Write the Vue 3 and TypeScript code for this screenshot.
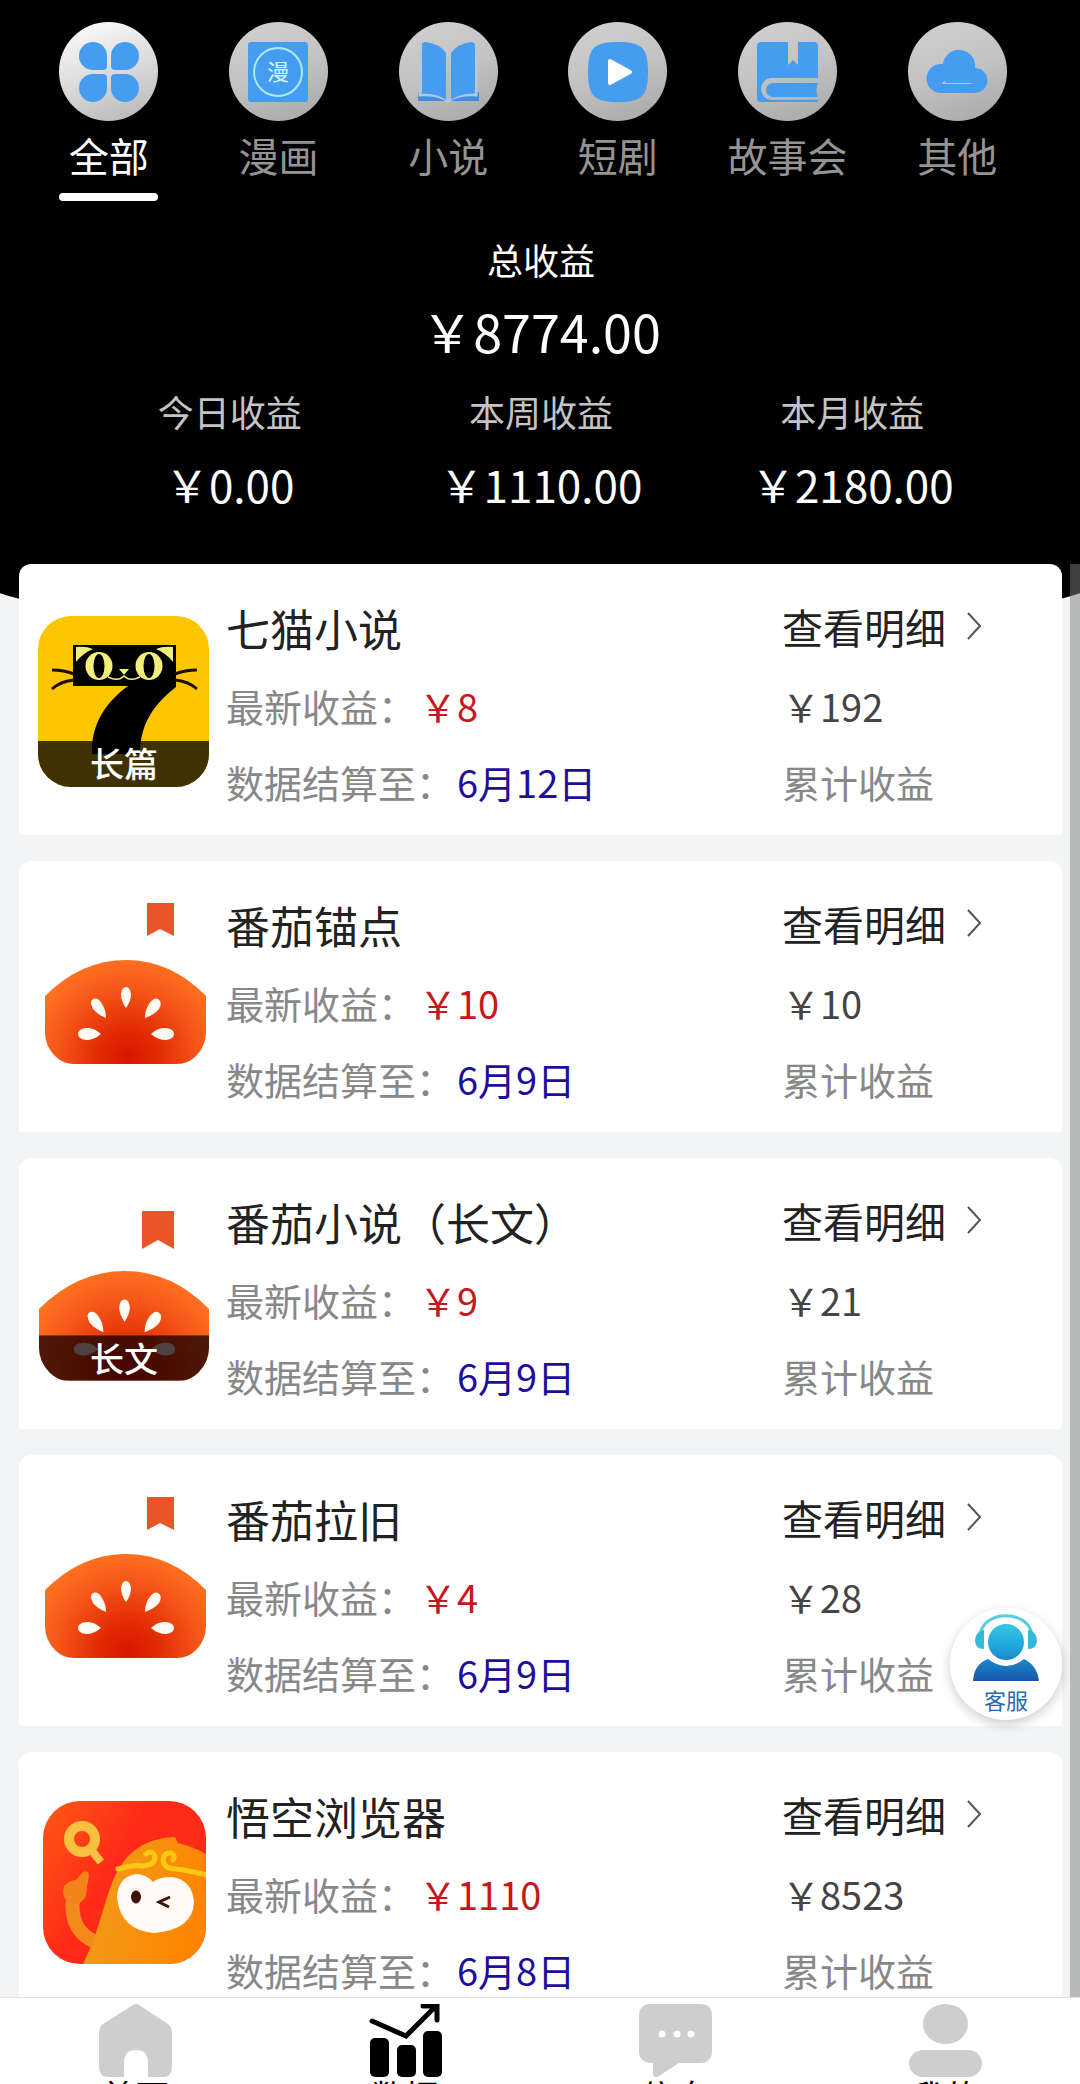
<script setup lang="ts">
import { ref } from 'vue'

type TabIcon = 'all' | 'comic' | 'novel' | 'drama' | 'story' | 'other'
type Logo = 'cat' | 'tomato' | 'tomatoLong' | 'monkey'
type NavIcon = 'home' | 'chart' | 'message' | 'user'

const tabs: { icon: TabIcon; label: string }[] = [
  { icon: 'all', label: '全部' },
  { icon: 'comic', label: '漫画' },
  { icon: 'novel', label: '小说' },
  { icon: 'drama', label: '短剧' },
  { icon: 'story', label: '故事会' },
  { icon: 'other', label: '其他' },
]
const activeTab = ref<TabIcon>('all')

const stats: { label: string; value: string }[] = [
  { label: '今日收益', value: '0.00' },
  { label: '本周收益', value: '1110.00' },
  { label: '本月收益', value: '2180.00' },
]

const cards: { logo: Logo; name: string; latest: number; date: string; total: number }[] = [
  { logo: 'cat', name: '七猫小说', latest: 8, date: '6月12日', total: 192 },
  { logo: 'tomato', name: '番茄锚点', latest: 10, date: '6月9日', total: 10 },
  { logo: 'tomatoLong', name: '番茄小说（长文）', latest: 9, date: '6月9日', total: 21 },
  { logo: 'tomato', name: '番茄拉旧', latest: 4, date: '6月9日', total: 28 },
  { logo: 'monkey', name: '悟空浏览器', latest: 1110, date: '6月8日', total: 8523 },
]

const navItems: { icon: NavIcon; label: string }[] = [
  { icon: 'home', label: '首页' },
  { icon: 'chart', label: '数据' },
  { icon: 'message', label: '信息' },
  { icon: 'user', label: '我的' },
]
const activeNav: NavIcon = 'chart'
</script>

<template>
  <div class="page">
    <header class="header">
      <div class="tabs" role="tablist">
        <button
          v-for="tab in tabs"
          :key="tab.icon"
          type="button"
          role="tab"
          class="tab"
          :class="{ active: tab.icon === activeTab }"
          :aria-selected="tab.icon === activeTab"
          @click="activeTab = tab.icon"
        >
          <span class="tab-icon">
            <svg viewBox="0 0 99 99" aria-hidden="true">
              <g v-if="tab.icon === 'all'" fill="#469df0">
                <path d="M34 20a14 14 0 0 0 0 28h10q4 0 4-4V34a14 14 0 0 0-14-14z" />
                <path d="M66 20a14 14 0 0 1 0 28H56q-4 0-4-4V34a14 14 0 0 1 14-14z" />
                <path d="M34 80a14 14 0 0 1 0-28h10q4 0 4 4v10a14 14 0 0 1-14 14z" />
                <path d="M66 80a14 14 0 0 0 0-28H56q-4 0-4 4v10a14 14 0 0 0 14 14z" />
              </g>
              <g v-else-if="tab.icon === 'comic'">
                <rect x="19" y="20" width="60" height="60" rx="3" fill="#469df0" />
                <circle cx="49" cy="50" r="24" fill="none" stroke="#a9ecff" stroke-width="2" />
                <text x="49" y="58" text-anchor="middle" font-size="22" fill="#d8f6ff">漫</text>
              </g>
              <g v-else-if="tab.icon === 'novel'">
                <path d="M19 70h7q14 2 21 9H19z" fill="#3d8ee0" />
                <path d="M80 70h-7q-14 2-21 9h28z" fill="#3d8ee0" />
                <path d="M21 28v45q18-1 28 6 10-7 28-6V28" fill="none" stroke="#b4c8dc" stroke-width="3" />
                <path d="M23 23q0-3 4-3 14 2 20 11v47q-10-7-24-7z" fill="#469df0" />
                <path d="M76 23q0-3-4-3-14 2-20 11v47q10-7 24-7z" fill="#469df0" />
              </g>
              <g v-else-if="tab.icon === 'drama'">
                <path d="M50 20c24 0 30 6 30 30s-6 30-30 30-30-6-30-30 6-30 30-30z" fill="#469df0" />
                <path d="M42 39l20 11-20 11z" fill="#fff" stroke="#fff" stroke-width="4" stroke-linejoin="round" />
              </g>
              <g v-else-if="tab.icon === 'story'">
                <path d="M23 20h27v23l5-5 5 5V20h16q4 0 4 4v32H34a11 11 0 0 0 0 22h46v2H23q-4 0-4-4V24q0-4 4-4z" fill="#469df0" />
                <path d="M80 61H35a7 7 0 0 0 0 14h45q-3-7 0-14z" fill="#469df0" />
              </g>
              <g v-else>
                <path d="M33 71a14 14 0 0 1 0-29h2a16 16 0 0 1 32 4a12.500 12.500 0 0 1 0 25z" fill="#469df0" />
                <path d="M34 62l2-3 2 2h24q2 0 2 1z" fill="#a9c9e8" />
              </g>
            </svg>
          </span>
          <span class="tab-label">{{ tab.label }}</span>
        </button>
      </div>

      <section class="summary">
        <p class="total-label">总收益</p>
        <p class="total-value">￥8774.00</p>
        <div class="stats">
          <div v-for="stat in stats" :key="stat.label" class="stat">
            <span class="stat-label">{{ stat.label }}</span>
            <span class="stat-value">￥{{ stat.value }}</span>
          </div>
        </div>
      </section>
    </header>

    <main class="list">
      <article v-for="card in cards" :key="card.name" class="card">
        <svg class="logo" viewBox="0 0 171 171" aria-hidden="true">
          <defs>
            <radialGradient id="tomatoSkin" gradientUnits="userSpaceOnUse" cx="90" cy="146" r="104">
              <stop offset="0" stop-color="#d91500" />
              <stop offset="0.300" stop-color="#e22c04" />
              <stop offset="0.700" stop-color="#f6581a" />
              <stop offset="1" stop-color="#ff7420" />
            </radialGradient>
            <linearGradient id="monkeySky" x1="0" y1="0" x2="1" y2="0.600">
              <stop offset="0" stop-color="#ff5a14" />
              <stop offset="0.500" stop-color="#ff2a18" />
              <stop offset="1" stop-color="#fb2c18" />
            </linearGradient>
            <linearGradient id="monkeyBody" x1="0" y1="0" x2="1" y2="0.300">
              <stop offset="0" stop-color="#eda020" />
              <stop offset="1" stop-color="#ff8500" />
            </linearGradient>
            <clipPath id="catClip"><rect width="171" height="171" rx="33" /></clipPath>
            <clipPath id="tomatoClip">
              <path d="M7 83Q43 47 88 47t80 36v36q0 14-10 24-8 8-19 8H36q-11 0-19-8-10-10-10-24z" />
            </clipPath>
            <clipPath id="monkeyClip"><rect x="5" y="-3" width="163" height="163" rx="37" /></clipPath>
          </defs>

          <g v-if="card.logo === 'cat'" clip-path="url(#catClip)">
            <rect width="171" height="171" fill="#fbc600" />
            <path d="M35 29h103v42C116 88 102 108 102 138H54C53 108 68 86 90 70H35z" fill="#000" />
            <g fill="none" stroke="#1a0f00" stroke-width="3">
              <path d="M14 54q12 0 22 4M14 73q9-8 22-9M159 54q-12 0-22 4M159 73q-9-8-22-9" />
            </g>
            <path d="M38 31q10-1 17 2-10 4-17 13zM135 31q-10-1-17 2 10 4 17 13z" fill="#f2ee7c" />
            <ellipse cx="61" cy="50" rx="13.500" ry="14" fill="#f2ee7c" />
            <ellipse cx="111" cy="50" rx="13.500" ry="14" fill="#f2ee7c" />
            <ellipse cx="61" cy="50" rx="5.500" ry="12" />
            <ellipse cx="111" cy="50" rx="5.500" ry="12" />
            <path d="M81 53h10l-5 6z" fill="#f2ee7c" />
            <path d="M70 61q10 5 16-1 6 6 16 1" fill="none" stroke="#f2ee7c" stroke-width="1.500" />
            <rect y="125" width="171" height="46" fill="#000" fill-opacity="0.750" />
            <text class="ribbon" x="86" y="161">长篇</text>
          </g>

          <g v-else-if="card.logo === 'monkey'" clip-path="url(#monkeyClip)">
            <rect x="5" y="-3" width="163" height="163" fill="url(#monkeySky)" />
            <circle cx="44" cy="35" r="13" fill="none" stroke="#fac040" stroke-width="10" />
            <path d="M54 47l9 11" stroke="#fac040" stroke-width="8" />
            <path d="M58 138C42 132 32 118 35 94" fill="none" stroke="#f58a1c" stroke-width="14" />
            <path d="M26 82q6-6 12-6l5-6q2-4 7-2 2 2-1 14 0 8-2 12-6 8-16 5-8-6-5-17z" fill="#f5831c" />
            <path d="M44 162C66 120 66 84 86 57Q104 34 137 33l3 6q14 3 30 12v112z" fill="url(#monkeyBody)" />
            <path d="M80 65q18-5 25-3 12-1 12-9-2-8-9-3" fill="none" stroke="#fdc814" stroke-width="5" stroke-linecap="round" />
            <path d="M169 71q-20-5-31-6-12 0-13-9 1-8 8-7 5 2 2 7" fill="none" stroke="#fdc814" stroke-width="5" stroke-linecap="round" />
            <path d="M115 78Q108 70 98 70 80 73 79 93q3 33 37 36 39-3 40-31-2-23-23-25-12 0-18 5z" fill="#fffaf4" />
            <ellipse cx="98" cy="93" rx="5" ry="6.500" fill="#3c140a" />
            <path d="M132 93l-11 5 10 5" fill="none" stroke="#3c140a" stroke-width="3" />
          </g>

          <template v-else>
            <path v-if="card.logo === 'tomato'" d="M109-10h27v33l-14-7-13 7z" fill="#ea5428" />
            <path v-else d="M104 1h32v38l-16-9-16 9z" fill="#ea5428" />
            <g :transform="card.logo === 'tomato' ? undefined : 'translate(-6.400 11.400) scale(1.056)'">
              <g clip-path="url(#tomatoClip)">
                <rect x="0" y="40" width="171" height="120" fill="url(#tomatoSkin)" />
                <g fill="#fffaf2">
                  <path d="M88 95q-5-7-5-14 1-7 5-7t5 7q0 7-5 14z" />
                  <path d="M68 105q-8-3-13-9-4-8 0-10 5-2 9 5 4 6 4 14z" />
                  <path d="M107 105q0-8 4-14 5-7 9-5 5 3 1 10-5 6-14 9z" />
                  <path d="M63 121q-7 6-15 6-8-1-8-6t8-6q8-1 15 6z" />
                  <path d="M113 121q7 6 15 6 8-1 8-6t-8-6q-8-1-15 6z" />
                </g>
                <rect v-if="card.logo === 'tomatoLong'" y="108" width="171" height="50" fill="#120000" fill-opacity="0.740" />
              </g>
            </g>
            <text v-if="card.logo === 'tomatoLong'" class="ribbon" x="86" y="162">长文</text>
          </template>
        </svg>

        <div class="info">
          <h2 class="name">{{ card.name }}</h2>
          <p class="line">最新收益：<span class="latest">￥{{ card.latest }}</span></p>
          <p class="line">数据结算至：<span class="date">{{ card.date }}</span></p>
        </div>

        <div class="side">
          <a href="#" class="detail">
            查看明细
            <svg viewBox="0 0 16 30" aria-hidden="true">
              <path d="M2 2l12 13L2 28" fill="none" stroke="#555" stroke-width="2" />
            </svg>
          </a>
          <span class="sum">￥{{ card.total }}</span>
          <span class="line">累计收益</span>
        </div>
      </article>
    </main>

    <div class="scrollbar" aria-hidden="true"></div>

    <button type="button" class="service">
      <svg viewBox="0 6 112 70" aria-hidden="true">
        <defs>
          <linearGradient id="agent" gradientUnits="userSpaceOnUse" x1="0" y1="8" x2="0" y2="74">
            <stop offset="0" stop-color="#3fd4e4" />
            <stop offset="0.450" stop-color="#1ea8dc" />
            <stop offset="1" stop-color="#1654a8" />
          </linearGradient>
        </defs>
        <path d="M30 28C32 1 80 1 82 28" fill="none" stroke="#58cde0" stroke-width="3" />
        <path d="M34 22v19q-9 0-9-9 1-9 9-10zM78 22v19q9 0 9-9-1-9-9-10z" fill="#35b8dc" />
        <circle cx="56" cy="34" r="18" fill="url(#agent)" />
        <path d="M23 73q1-17 15-22 18 14 36 0 13 6 15 22z" fill="url(#agent)" />
      </svg>
      <span>客服</span>
    </button>

    <nav class="nav">
      <a
        v-for="item in navItems"
        :key="item.icon"
        href="#"
        class="nav-item"
        :class="{ current: item.icon === activeNav }"
      >
        <svg viewBox="0 0 73 73" fill="currentColor" aria-hidden="true">
          <path
            v-if="item.icon === 'home'"
            d="M34 1q3-2 6 0l29 19q4 3 4 9v34q0 10-9 10H49V57q-1-11-12-11T25 57v16H10Q0 73 0 63V29q0-6 4-9z"
          />
          <g v-else-if="item.icon === 'chart'">
            <rect x="1" y="34" width="19" height="39" rx="5" />
            <rect x="28" y="41" width="19" height="32" rx="5" />
            <rect x="54" y="27" width="19" height="46" rx="5" />
            <path
              d="M3 17l34 15L65 4M54 2h14v14"
              fill="none"
              stroke="currentColor"
              stroke-width="5"
              stroke-linecap="round"
            />
          </g>
          <g v-else-if="item.icon === 'message'">
            <path d="M12 0h49q12 0 12 12v35q0 12-12 12H40L20 72q-5 3-6-2V59q-14 0-14-12V12Q0 0 12 0z" />
            <g fill="#fff">
              <circle cx="23" cy="30" r="3.500" />
              <circle cx="38" cy="30" r="3.500" />
              <circle cx="52" cy="30" r="3.500" />
            </g>
          </g>
          <g v-else>
            <ellipse cx="36.500" cy="20" rx="22.500" ry="20" />
            <rect y="46" width="73" height="27" rx="14" />
          </g>
        </svg>
        <span>{{ item.label }}</span>
      </a>
    </nav>
  </div>
</template>

<style>
body {
  margin: 0;
}
</style>

<style scoped>
.page {
  position: relative;
  display: flex;
  flex-direction: column;
  height: 100vh;
  overflow: hidden;
  background: #f3f4f5;
  font-family: 'Noto Sans CJK SC', sans-serif;
  color: #222;
}

p,
h2 {
  margin: 0;
  font-weight: 400;
}

button {
  padding: 0;
  border: 0;
  font: inherit;
  cursor: pointer;
}

a {
  color: inherit;
  text-decoration: none;
}

.header {
  position: relative;
  flex: none;
  height: 564px;
  background: #000;
  color: #fff;
}

/* curved lower edge that shows on both sides of the first card */
.header::after {
  content: '';
  position: absolute;
  left: -20%;
  bottom: -96px;
  width: 140%;
  height: 222px;
  border-radius: 0 0 50% 50% / 0 0 100% 100%;
  background: #000;
}

.tabs {
  display: grid;
  grid-template-columns: repeat(6, 1fr);
  padding: 22px 38px 0 24px;
}

.tab {
  display: flex;
  flex-direction: column;
  align-items: center;
  background: none;
  color: #949494;
}

.tab-icon {
  width: 99px;
  height: 99px;
  border-radius: 50%;
  background: linear-gradient(160deg, #d2d2d2, #c2c2c2 50%, #a6a6a6);
}

.tab-icon svg {
  display: block;
}

.tab-label {
  margin-top: 4px;
  font-size: 40px;
  line-height: 60px;
}

.tab::after {
  content: '';
  width: 99px;
  height: 8px;
  margin-top: 8px;
  border-radius: 4px;
}

.active {
  color: #fff;
}

.active .tab-icon {
  background: linear-gradient(160deg, #fff, #dcdcdc 50%, #b4b4b4);
}

.active::after {
  background: #fff;
}

.summary {
  position: relative;
  z-index: 1;
  padding: 32px 0 0 2px;
  text-align: center;
}

.total-label {
  font-size: 36px;
  line-height: 52px;
}

.total-value {
  font-size: 52px;
  line-height: 92px;
}

.stats {
  display: grid;
  grid-template-columns: repeat(3, 1fr);
  padding: 8px 72px 0;
}

.stat {
  display: flex;
  flex-direction: column;
  align-items: center;
}

.stat-label {
  color: #c4c4c4;
  font-size: 36px;
  line-height: 52px;
}

.stat-value {
  font-size: 44px;
  line-height: 94px;
}

.list {
  position: relative;
  flex: 1;
  min-height: 0;
  overflow-y: auto;
  scrollbar-width: none;
  padding: 0 18px 0 19px;
}

.card {
  display: flex;
  box-sizing: border-box;
  height: 271px;
  margin-bottom: 26px;
  padding: 0 19px;
  border-radius: 12px 12px 2px 2px;
  background: #fff;
}

.logo {
  flex: none;
  width: 171px;
  height: 171px;
  margin-top: 52px;
  overflow: visible;
}

.ribbon {
  fill: #fff;
  font-size: 34px;
  font-weight: 500;
  text-anchor: middle;
}

.info {
  flex: 1;
  margin-left: 17px;
  padding-top: 26px;
}

.name {
  margin-bottom: 2px;
  font-size: 44px;
  line-height: 76px;
}

.line {
  color: #888;
  font-size: 38px;
  line-height: 76px;
}

.latest,
.date {
  margin-left: 3px;
}

.latest {
  color: #c8161d;
}

.date {
  color: #1b0f9c;
}

.side {
  display: flex;
  flex-direction: column;
  width: 261px;
  padding-top: 26px;
}

.detail {
  display: flex;
  align-items: center;
  gap: 20px;
  margin-bottom: 6px;
  font-size: 41px;
  line-height: 72px;
}

.detail svg {
  width: 16px;
  height: 30px;
}

.sum {
  color: #444;
  font-size: 38px;
  line-height: 76px;
}

.scrollbar {
  position: absolute;
  top: 564px;
  right: 0;
  bottom: 87px;
  width: 10px;
  background: rgba(125, 125, 125, 0.51);
}

.service {
  position: absolute;
  right: 18px;
  bottom: 364px;
  width: 112px;
  height: 112px;
  border-radius: 50%;
  background: #fff;
  box-shadow: 0 4px 12px rgba(0, 0, 0, 0.2);
  color: #2c69a6;
  font-size: 22px;
  line-height: 30px;
}

.service svg,
.service span {
  display: block;
}

.nav {
  display: grid;
  grid-template-columns: repeat(4, 1fr);
  flex: none;
  box-sizing: border-box;
  height: 87px;
  overflow: hidden;
  border-top: 1px solid #e4e4e6;
  background: #fff;
}

.nav-item {
  display: flex;
  flex-direction: column;
  align-items: center;
  padding-top: 6px;
}

.nav-item svg {
  flex: none;
  width: 73px;
  height: 73px;
  color: #cecece;
}

.nav-item.current svg {
  color: #000;
}

.nav-item span {
  color: #000;
  font-size: 34px;
  line-height: 38px;
}
</style>
